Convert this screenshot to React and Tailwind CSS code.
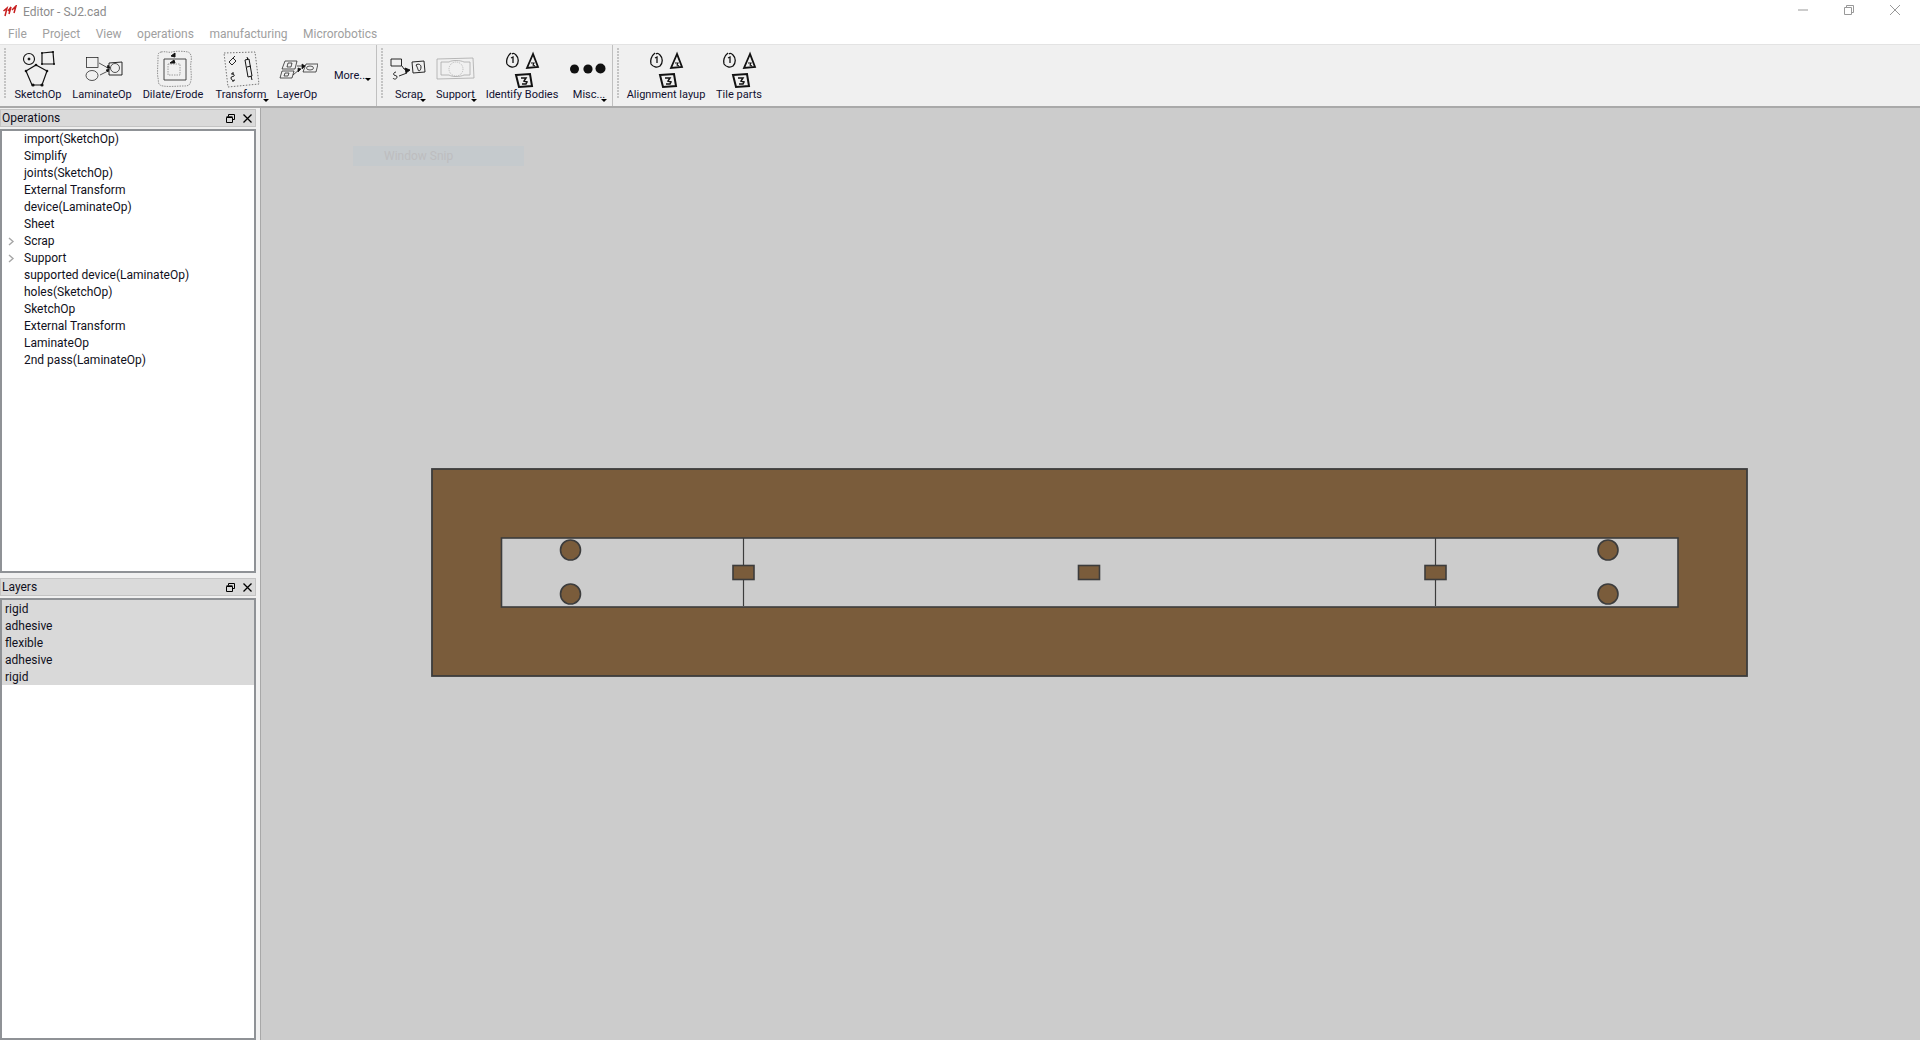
const font = { fontFamily: 'Roboto, "Noto Sans", sans-serif' };

const Ink = ({ children, box, className = "" }) => (
  <svg viewBox={box} className={`w-full h-[42px] mt-[2px] shrink-0 ${className}`} fill="none" stroke="#111" strokeWidth="1">
    {children}
  </svg>
);

function NumberGlyphs({ dx = 0 }) {
  return (
    <g transform={`translate(${dx} 0)`}>
      <path d="M511 53c-4 3-5 8-4 11 2 3 6 4 9 2 3-3 3-8 0-11-1-1-3-2-4-1" strokeWidth="1.3" />
      <path d="M511 58l2-1v6" strokeWidth="1.3" />
      <path d="M533 54l-6 14 11-1z" strokeWidth="1.8" />
      <path d="M531 63h3l-1 2 2 1" strokeWidth="1.1" />
      <path d="M516 75l14-1 2 12-13 1z" strokeWidth="2" />
      <path d="M521 78h5l-2 3 3 1-1 2-4 0" strokeWidth="1.5" />
    </g>
  );
}

const toolbarGroups = [
  {
    w: 377,
    handle: 12,
    buttons: [
      {
        label: "SketchOp", w: 52,
        box: "12 47 52 42",
        icon: (
          <>
            <circle cx="29" cy="59" r="5.5" strokeWidth="1.1" />
            <circle cx="29" cy="59" r="1" fill="#111" />
            <path d="M42 53l11-1 1 12-12 0z" strokeWidth="1.2" />
            <path d="M36 65l11 6-5 14H32l-6-14z" strokeWidth="1.2" />
            <g fill="#111" stroke="none">
              <circle cx="36" cy="65" r="1.3" /><circle cx="47" cy="71" r="1.3" /><circle cx="42" cy="85" r="1.6" />
              <circle cx="33" cy="85" r="1.6" /><circle cx="26" cy="71" r="1.3" /><circle cx="42" cy="53" r="1" />
              <circle cx="53" cy="52" r="1" /><circle cx="54" cy="64" r="1" /><circle cx="42" cy="64" r="1" />
            </g>
          </>
        ),
      },
      {
        label: "LaminateOp", w: 76,
        box: "64 47 76 42",
        icon: (
          <g strokeWidth="0.7">
            <rect x="86.5" y="57.5" width="11.5" height="10" />
            <ellipse cx="92" cy="75.5" rx="6" ry="5" />
            <path d="M99 63l9 5M100 75l8-4" />
            <path d="M108 65l-1 3 3 0zM108 72l-2-2 3-1z" fill="#111" />
            <path d="M109 63l13-1v13h-13z" strokeWidth="0.9" />
            <circle cx="115" cy="68" r="4.5" />
          </g>
        ),
      },
      {
        label: "Dilate/Erode", w: 66,
        box: "140 47 66 42",
        icon: (
          <>
            <path d="M161 52c5-1 8 1 11 0s11-1 16 0c3 1 4 5 3 10s1 12 0 18-3 6-8 6-14 1-20 0-4-4-5-8 0-14 0-20 1-5 3-6z" stroke="#777" strokeWidth="0.8" strokeDasharray="1.5 1" />
            <path d="M164 59h22v21h-22z" strokeWidth="0.9" stroke="#333" />
            <path d="M168 64h12v11h-12z" stroke="#888" strokeWidth="0.8" strokeDasharray="1.5 1" />
            <path d="M171 56l4-3 0 4zM170 63l4-3 1 3z" fill="#111" />
          </>
        ),
      },
      {
        label: "Transform", w: 70, drop: "right-[7px]",
        box: "206 47 70 42",
        icon: (
          <>
            <path d="M224 53l31-1 4 32-31 3z" stroke="#555" strokeWidth="0.8" strokeDasharray="1.5 1.5" />
            <path d="M229 62l4-4 3 3-4 4zM233 58l2-2" strokeWidth="0.9" />
            <path d="M245 60l4-1 3 17-4 1zM247 57l1 3M251 76l1 4M247 67l4-1" strokeWidth="1" />
            <path d="M231 74c2-1 4 1 3 2s-3 0-3 2 2 3 4 2M233 72v3M233 80v2" strokeWidth="1" />
          </>
        ),
      },
      {
        label: "LayerOp", w: 42,
        box: "276 47 42 42",
        icon: (
          <g strokeWidth="0.7">
            <path d="M285 61l12 0-2 8-13 0zM282 71l12 0-2 7-12 0z" />
            <path d="M288 63h4l-1 4h-4zM285 73l4 0-1 3h-4z" />
            <path d="M297 66l8 0M293 75l7-6" />
            <path d="M302 64l3 2-3 3zM298 68l3 1-3 3z" fill="#111" />
            <path d="M306 64l12 0-2 8-13 0z" />
            <ellipse cx="310" cy="68" rx="3.5" ry="2" />
          </g>
        ),
      },
    ],
  },
  {
    w: 236,
    handle: 8,
    buttons: [
      {
        label: "Scrap", w: 48, drop: "right-[7px]",
        box: "385 47 48 42",
        icon: (
          <g strokeWidth="0.9">
            <path d="M391 59h10.5v7H391z" />
            <path d="M402 66l2 3 3 1" />
            <path d="M396 72c-2 0-3 2-2 3s3 0 3 2-3 3-4 1M399 76l8-3" />
            <path d="M405 68l5 2-4 3z" fill="#111" />
            <path d="M412 62l12-1 1 11-12 1z" />
            <path d="M416 65c3-2 5 0 5 2s-1 4-2 4-1-3-3-6z" />
          </g>
        ),
      },
      {
        label: "Support", w: 45, drop: "right-[1px]",
        box: "433 47 45 42",
        icon: (
          <g stroke="#a8a8a8" strokeWidth="0.8">
            <path d="M437 59l36-1 1 20-37 1z" />
            <path d="M441 62l8 0c3-2 11-2 15 0l6 0v13l-6 0c-4 2-12 2-15 0l-8 0z" />
            <circle cx="456" cy="69" r="7" strokeDasharray="1 1" />
          </g>
        ),
      },
      {
        label: "Identify Bodies", w: 88,
        box: "478 47 88 42",
        icon: <NumberGlyphs />,
      },
      {
        label: "Misc...", w: 46, drop: "right-[5px]",
        box: "566 47 46 42",
        icon: (
          <g fill="#111" stroke="none">
            <circle cx="574.5" cy="69" r="4.5" />
            <circle cx="588" cy="69" r="4.6" />
            <circle cx="600.5" cy="68.5" r="5" />
          </g>
        ),
      },
    ],
  },
  {
    w: 160,
    handle: 7,
    last: true,
    buttons: [
      {
        label: "Alignment layup", w: 92,
        box: "620 47 92 42",
        icon: <NumberGlyphs dx={144} />,
      },
      {
        label: "Tile parts", w: 54,
        box: "712 47 54 42",
        icon: <NumberGlyphs dx={217} />,
      },
    ],
  },
];

function Handle() {
  return (
    <div className="w-[2px] mt-[3px] ml-[4px] flex flex-col gap-[1px] shrink-0">
      {Array.from({ length: 17 }).map((_, i) => (
        <div key={i} className="w-[2px] h-[2px] bg-[#c4c4c4]" />
      ))}
    </div>
  );
}

const Arrow = ({ className }) => (
  <span className={`absolute w-0 h-0 border-l-[3px] border-r-[3px] border-t-[3px] border-l-transparent border-r-transparent border-t-black ${className}`} />
);

function ToolButton({ b }) {
  return (
    <div className="relative flex flex-col items-center shrink-0" style={{ width: b.w }}>
      <Ink box={b.box}>{b.icon}</Ink>
      <div className="text-[11px] leading-[16px] whitespace-nowrap text-[#101030] mt-[-2px]">{b.label}</div>
      {b.drop && <Arrow className={`bottom-[4px] ${b.drop}`} />}
    </div>
  );
}

function Toolbar() {
  return (
    <div className="h-[64px] bg-[#f0f0f0] border-t border-t-[#e3e3e3] border-b-2 border-b-[#a9a9a9] flex shrink-0">
      {toolbarGroups.map((g, i) => (
        <div key={i} className={`flex h-full shrink-0 ${g.last ? "" : "border-r border-r-[#c0c0c0]"}`} style={{ width: g.w }}>
          <div className="shrink-0" style={{ width: g.handle }}><Handle /></div>
          <div className="flex">
            {g.buttons.map((b) => <ToolButton key={b.label} b={b} />)}
            {i === 0 && (
              <div className="relative w-[58px] flex items-center justify-center shrink-0">
                <span className="text-[11px] text-[#101030] mt-[1px] ml-[8px] whitespace-nowrap">More...</span>
                <Arrow className="right-[5px] top-[33px]" />
              </div>
            )}
          </div>
        </div>
      ))}
    </div>
  );
}

function DockTitle({ title }) {
  return (
    <div className="h-[18px] shrink-0 bg-[#dadada] border border-[#c4c4c4] flex items-center justify-between pr-[3px] pl-[1px] text-[12px] text-[#101020]">
      <span>{title}</span>
      <span className="flex items-center gap-[8px]">
        <svg width="9" height="9" viewBox="0 0 9 9" fill="none" stroke="#000">
          <path d="M2.5 2.5V.5h6v5h-2" />
          <path d="M.5 3.5h6v5h-6z" />
          <path d="M.5 2.8h6" />
        </svg>
        <svg width="9" height="9" viewBox="0 0 9 9" fill="none" stroke="#000" strokeWidth="1.3">
          <path d="M.5.5l8 8M8.5.5l-8 8" />
        </svg>
      </span>
    </div>
  );
}

const ops = [
  ["import(SketchOp)"], ["Simplify"], ["joints(SketchOp)"], ["External Transform"], ["device(LaminateOp)"], ["Sheet"],
  ["Scrap", true], ["Support", true], ["supported device(LaminateOp)"], ["holes(SketchOp)"], ["SketchOp"],
  ["External Transform"], ["LaminateOp"], ["2nd pass(LaminateOp)"],
];
const layers = ["rigid", "adhesive", "flexible", "adhesive", "rigid"];

function LeftDock() {
  return (
    <div className="w-[256px] shrink-0 flex flex-col bg-[#f0f0f0] pt-[1px]">
      <DockTitle title="Operations" />
      <div className="mt-[2px] h-[444px] shrink-0 bg-white border-2 border-[#8f9296] text-[12px] text-[#101020]">
        {ops.map(([t, arrow], i) => (
          <div key={i} className="h-[17px] leading-[17px] relative pl-[22px] whitespace-nowrap">
            {arrow && (
              <svg className="absolute left-[6px] top-[4px]" width="7" height="9" viewBox="0 0 7 9" fill="none" stroke="#a6a6a6" strokeWidth="1.4">
                <path d="M1 1l4 3.5L1 8" />
              </svg>
            )}
            {t}
          </div>
        ))}
      </div>
      <div className="h-[5px] shrink-0" />
      <DockTitle title="Layers" />
      <div className="mt-[2px] flex-1 bg-white border-2 border-[#8f9296] text-[12px] text-[#101020]">
        <div className="bg-[#d9d9d9]">
          {layers.map((t, i) => (
            <div key={i} className="h-[17px] leading-[19px] pl-[3px]">{t}</div>
          ))}
        </div>
      </div>
    </div>
  );
}

function Drawing() {
  const s = { stroke: "#3c3c3c", strokeWidth: 1.6, fill: "#7a5c3b" };
  const X = (v) => v - 261;
  const Y = (v) => v - 108;
  const circles = [[570.5, 550], [570.5, 594], [1608, 550], [1608, 594]];
  const rects = [743.5, 1089, 1435.5];
  const lines = [743.5, 1435.5];
  return (
    <svg className="w-full h-full block" viewBox="0 0 1659 932">
      <rect x={X(432)} y={Y(469)} width="1315" height="207" {...s} strokeWidth="1.8" />
      <rect x={X(501.5)} y={Y(538)} width="1176.5" height="69" fill="#cccccc" stroke="#3c3c3c" strokeWidth="1.6" />
      {lines.map((x) => (
        <line key={x} x1={X(x)} x2={X(x)} y1={Y(538)} y2={Y(606)} stroke="#3c3c3c" strokeWidth="1.2" />
      ))}
      {circles.map(([x, y]) => (
        <circle key={x + "-" + y} cx={X(x)} cy={Y(y)} r="10" {...s} />
      ))}
      {rects.map((x) => (
        <rect key={x} x={X(x) - 10.5} y={Y(565.5)} width="21" height="14" {...s} />
      ))}
    </svg>
  );
}

export default function App() {
  return (
    <div className="w-[1920px] h-[1040px] flex flex-col bg-[#f0f0f0] overflow-hidden" style={font}>
      <div className="h-[23px] bg-white flex items-center justify-between shrink-0">
        <div className="flex items-center pl-[3px] gap-[6px]">
          <svg width="14" height="13" viewBox="0 0 14 13" fill="none" stroke="#c81e1e" strokeWidth="1.5">
            <path d="M.5 6L4 3l-2 8M5 6l3-4-2 7M9 5l4-4-2 7" />
          </svg>
          <span className="text-[12px] text-[#8c8c8c]">Editor - SJ2.cad</span>
        </div>
        <div className="flex items-center gap-[36px] pr-[20px] pb-[3px]">
          <svg width="10" height="2" viewBox="0 0 10 2" stroke="#999"><path d="M0 1h10" /></svg>
          <svg width="10" height="10" viewBox="0 0 10 10" fill="none" stroke="#999">
            <path d="M2.5 2.5V.5h7v7h-2" />
            <path d="M.5 2.5h7v7h-7z" />
          </svg>
          <svg width="10" height="10" viewBox="0 0 10 10" fill="none" stroke="#999"><path d="M0 0l10 10M10 0L0 10" /></svg>
        </div>
      </div>
      <div className="h-[21px] bg-white flex items-center pl-[8px] gap-[15.5px] text-[12px] text-[#a0a0a0] shrink-0">
        {["File", "Project", "View", "operations", "manufacturing", "Microrobotics"].map((m) => (
          <span key={m}>{m}</span>
        ))}
      </div>
      <Toolbar />
      <div className="flex-1 flex min-h-0">
        <LeftDock />
        <div className="w-[4px] shrink-0" />
        <div className="relative flex-1 bg-[#cccccc] border-l border-l-[#a8a8a8]">
          <div className="absolute inset-0"><Drawing /></div>
          <div className="absolute left-[92px] top-[38px] w-[171px] h-[20px] bg-[#c5cacd] pl-[31px] leading-[20px] text-[12px] text-[#bdbdbf]">Window Snip</div>
        </div>
      </div>
    </div>
  );
}
